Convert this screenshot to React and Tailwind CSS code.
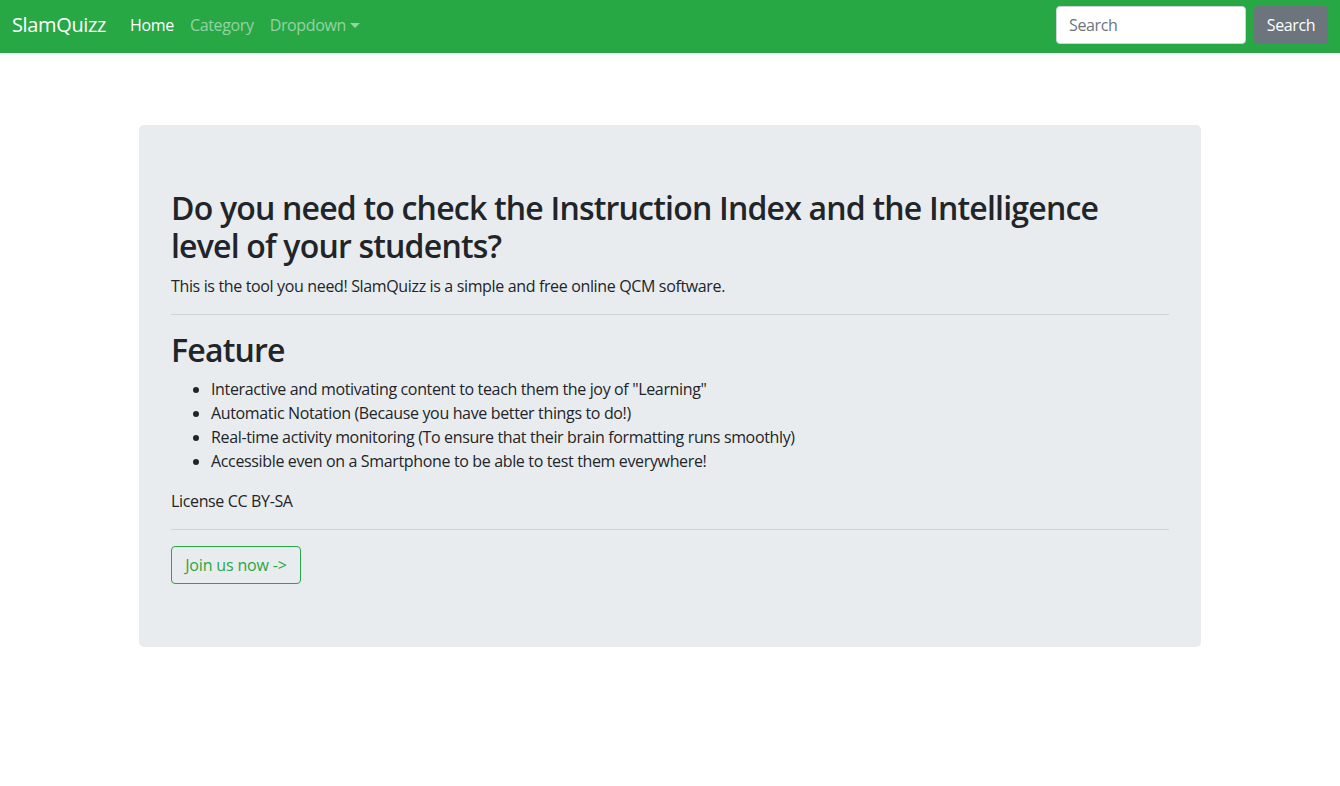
export default function App() {
  return (
    <div className="min-h-[786px] bg-white text-[#212529] font-['Open_Sans',sans-serif] text-base tracking-[-0.022em]">
      {/* Navbar */}
      <nav className="h-[53px] bg-[#28a745] flex items-center px-3 pb-[3px]">
        <a className="text-white text-xl mr-4 py-[5px]">SlamQuizz</a>
        <ul className="flex items-center">
          <li><a className="block px-2 py-2 text-white">Home</a></li>
          <li><a className="block px-2 py-2 text-white/50">Category</a></li>
          <li>
            <a className="flex items-center px-2 py-2 text-white/50">
              Dropdown
              <span className="ml-[4px] w-0 h-0 border-t-[5px] border-t-white/50 border-x-[5px] border-x-transparent" />
            </a>
          </li>
        </ul>
        <form className="ml-auto flex items-center gap-2">
          <input
            type="text"
            placeholder="Search"
            className="w-[190px] h-[38px] px-3 bg-white border border-[#ced4da] rounded text-[#495057] placeholder-[#6c757d] outline-0"
          />
          <button className="h-[38px] w-[74px] bg-[#6c757d] text-white rounded">Search</button>
        </form>
      </nav>

      {/* Jumbotron */}
      <div className="w-[1062px] mx-auto mt-[72px] bg-[#e9ecef] rounded-[5px] px-8 pt-16 pb-[63px]">
        <h1 className="text-[32px] leading-[1.2] font-semibold mb-2 tracking-[-0.025em]">
          Do you need to check the Instruction Index and the Intelligence level of your students?
        </h1>
        <p className="leading-6 mb-4">
          This is the tool you need! SlamQuizz is a simple and free online QCM software.
        </p>
        <hr className="border-t border-black/10 my-4" />
        <h2 className="text-[32px] leading-[1.2] font-semibold mb-2 tracking-[-0.025em]">Feature</h2>
        <ul className="list-disc pl-10 leading-6 mb-4">
          <li>Interactive and motivating content to teach them the joy of "Learning"</li>
          <li>Automatic Notation (Because you have better things to do!)</li>
          <li>Real-time activity monitoring (To ensure that their brain formatting runs smoothly)</li>
          <li>Accessible even on a Smartphone to be able to test them everywhere!</li>
        </ul>
        <p className="leading-6 mb-4">License CC BY-SA</p>
        <hr className="border-t border-black/10 my-4" />
        <button className="h-[38px] w-[130px] border border-[#28a745] text-[#28a745] rounded tracking-[-0.01em]">
          Join us now -&gt;
        </button>
      </div>
    </div>
  );
}
